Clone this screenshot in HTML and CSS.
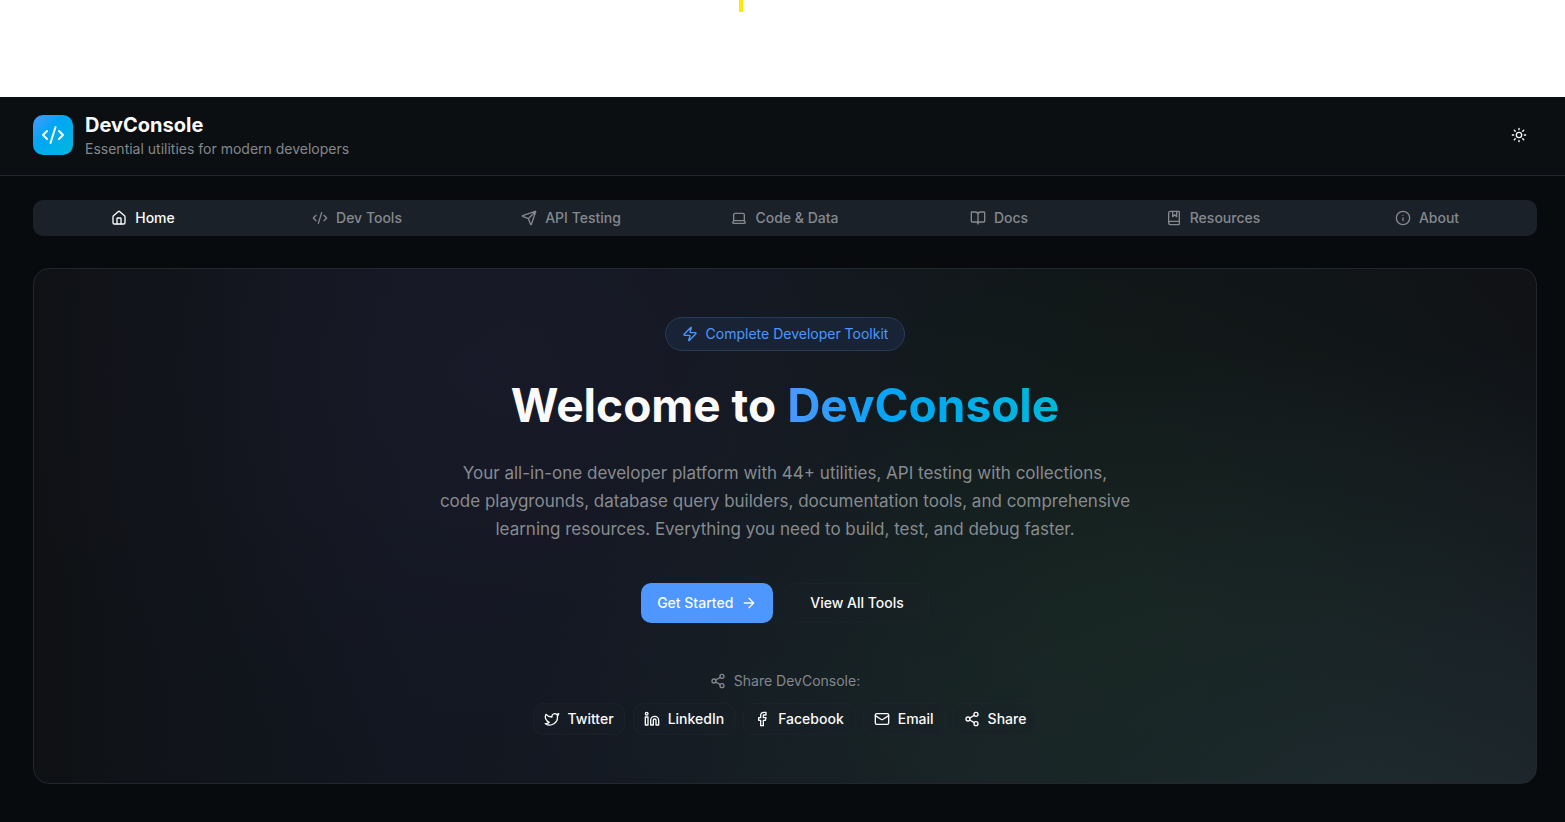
FILE: index.html
```html
<!DOCTYPE html>
<html lang="en">
<head>
<meta charset="utf-8">
<meta name="viewport" content="width=device-width, initial-scale=1">
<title>DevConsole</title>
<link rel="stylesheet" href="styles.css">
</head>
<body>
<svg class="sprite" aria-hidden="true">
  <symbol id="code" viewBox="0 0 24 24"><path d="m18 16 4-4-4-4M6 8l-4 4 4 4M14.5 4l-5 16"/></symbol>
  <symbol id="share" viewBox="0 0 24 24"><circle cx="18" cy="5" r="3"/><circle cx="6" cy="12" r="3"/><circle cx="18" cy="19" r="3"/><path d="m8.59 13.51 6.83 3.98M15.41 6.51l-6.82 3.98"/></symbol>
</svg>
<div class="top-strip"><span class="marker"></span></div>
<div class="app">
  <header class="header">
    <div class="brand">
      <div class="logo"><svg class="icon icon-lg"><use href="#code"/></svg></div>
      <div>
        <div class="brand-name">DevConsole</div>
        <div class="brand-tagline">Essential utilities for modern developers</div>
      </div>
    </div>
    <button class="theme-toggle" type="button" aria-label="Toggle theme">
      <svg class="icon" viewBox="0 0 24 24"><circle cx="12" cy="12" r="4"/><path d="M12 2v2M12 20v2M4.93 4.93l1.41 1.41M17.66 17.66l1.41 1.41M2 12h2M20 12h2M6.34 17.66l-1.41 1.41M19.07 4.93l-1.41 1.41"/></svg>
    </button>
  </header>
  <main class="main">
    <nav class="tabs" aria-label="Main">
      <a class="tab tab-active" href="#home"><svg class="icon" viewBox="0 0 24 24"><path d="M15 21v-8a1 1 0 0 0-1-1h-4a1 1 0 0 0-1 1v8"/><path d="M3 10a2 2 0 0 1 .71-1.53l7-6a2 2 0 0 1 2.58 0l7 6A2 2 0 0 1 21 10v9a2 2 0 0 1-2 2H5a2 2 0 0 1-2-2z"/></svg>Home</a>
      <a class="tab" href="#tools"><svg class="icon"><use href="#code"/></svg>Dev Tools</a>
      <a class="tab" href="#api"><svg class="icon" viewBox="0 0 24 24"><path d="M14.54 21.69a.5.5 0 0 0 .93-.03l6.5-19a.5.5 0 0 0-.63-.63l-19 6.5a.5.5 0 0 0-.03.93l7.93 3.18a2 2 0 0 1 1.11 1.11zM21.85 2.15l-10.94 10.94"/></svg>API Testing</a>
      <a class="tab" href="#data"><svg class="icon" viewBox="0 0 24 24"><path d="M18 5a2 2 0 0 1 2 2v8.53a2 2 0 0 0 .21.89l1.07 2.13a1 1 0 0 1-.9 1.45H3.62a1 1 0 0 1-.9-1.45l1.07-2.13a2 2 0 0 0 .21-.89V7a2 2 0 0 1 2-2zM20.05 15.99H3.95"/></svg>Code &amp; Data</a>
      <a class="tab" href="#docs"><svg class="icon" viewBox="0 0 24 24"><path d="M12 7v14M3 18a1 1 0 0 1-1-1V4a1 1 0 0 1 1-1h5a4 4 0 0 1 4 4 4 4 0 0 1 4-4h5a1 1 0 0 1 1 1v13a1 1 0 0 1-1 1h-6a3 3 0 0 0-3 3 3 3 0 0 0-3-3z"/></svg>Docs</a>
      <a class="tab" href="#resources"><svg class="icon" viewBox="0 0 24 24"><path d="M10 2v8l3-3 3 3V2"/><path d="M4 19.5v-15A2.5 2.5 0 0 1 6.5 2H19a1 1 0 0 1 1 1v18a1 1 0 0 1-1 1H6.5a1 1 0 0 1 0-5H20"/></svg>Resources</a>
      <a class="tab" href="#about"><svg class="icon" viewBox="0 0 24 24"><circle cx="12" cy="12" r="10"/><path d="M12 16v-4M12 8h.01"/></svg>About</a>
    </nav>
    <section class="hero">
      <div class="badge"><svg class="icon" viewBox="0 0 24 24"><path d="M4 14a1 1 0 0 1-.78-1.63l9.9-10.2a.5.5 0 0 1 .86.46l-1.92 6.02A1 1 0 0 0 13 10h7a1 1 0 0 1 .78 1.63l-9.9 10.2a.5.5 0 0 1-.86-.46l1.92-6.02A1 1 0 0 0 11 14z"/></svg>Complete Developer Toolkit</div>
      <h1 class="title">Welcome to <span class="title-accent">DevConsole</span></h1>
      <p class="lead">Your all-in-one developer platform with 44+ utilities, API testing with collections,<br>code playgrounds, database query builders, documentation tools, and comprehensive<br>learning resources. Everything you need to build, test, and debug faster.</p>
      <div class="actions">
        <button class="button button-primary" type="button">Get Started<svg class="icon" viewBox="0 0 24 24"><path d="M5 12h14M12 5l7 7-7 7"/></svg></button>
        <button class="button button-outline" type="button">View All Tools</button>
      </div>
      <div class="share-label"><svg class="icon"><use href="#share"/></svg>Share DevConsole:</div>
      <div class="share-row">
        <button class="share-button" type="button"><svg class="icon" viewBox="0 0 24 24"><path d="M22 4s-.7 2.1-2 3.4c1.6 10-9.4 17.3-18 11.6 2.2.1 4.4-.6 6-2C3 15.5.5 9.6 3 5c2.2 2.6 5.6 4.1 9 4-.9-4.2 4-6.6 7-3.8 1.1 0 3-1.2 3-1.2z"/></svg>Twitter</button>
        <button class="share-button" type="button"><svg class="icon" viewBox="0 0 24 24"><path d="M16 8a6 6 0 0 1 6 6v7h-4v-7a2 2 0 0 0-4 0v7h-4v-7a6 6 0 0 1 6-6z"/><rect x="2" y="9" width="4" height="12"/><circle cx="4" cy="4" r="2"/></svg>LinkedIn</button>
        <button class="share-button" type="button"><svg class="icon" viewBox="0 0 24 24"><path d="M18 2h-3a5 5 0 0 0-5 5v3H7v4h3v8h4v-8h3l1-4h-4V7a1 1 0 0 1 1-1h3z"/></svg>Facebook</button>
        <button class="share-button" type="button"><svg class="icon" viewBox="0 0 24 24"><rect x="2" y="4" width="20" height="16" rx="2"/><path d="m22 7-8.97 5.7a1.94 1.94 0 0 1-2.06 0L2 7"/></svg>Email</button>
        <button class="share-button" type="button"><svg class="icon"><use href="#share"/></svg>Share</button>
      </div>
    </section>
  </main>
</div>
</body>
</html>
```

FILE: styles.css
```css
* { box-sizing: border-box; }

body {
  margin: 0;
  min-height: 100vh;
  display: flex;
  flex-direction: column;
  background: #fff;
  color: #fafafa;
  font-family: Inter, "Liberation Sans", sans-serif;
  font-size: 14px;
  line-height: 20px;
}

button { font: inherit; color: inherit; }
.sprite { display: none; }

.icon {
  width: 16px;
  height: 16px;
  flex: none;
  fill: none;
  stroke: currentColor;
  stroke-width: 2;
  stroke-linecap: round;
  stroke-linejoin: round;
}
.icon-lg { width: 24px; height: 24px; }

.top-strip {
  height: 97px;
  display: flex;
  justify-content: center;
  padding-right: 84px;
}
.marker { width: 4px; height: 12px; background: #fbe60d; }

.app { flex: 1; background: #070b0e; }

.header {
  display: flex;
  align-items: center;
  justify-content: space-between;
  padding: 14px 28px 16px 33px;
  background: #0b0f12;
  border-bottom: 1px solid #23272d;
}
.brand { display: flex; align-items: center; gap: 12px; }
.logo {
  width: 40px;
  height: 40px;
  display: flex;
  align-items: center;
  justify-content: center;
  border-radius: 10px;
  background: linear-gradient(135deg, #4d97ff, #00a6f4 40%, #00b8db);
}
.brand-name { font-size: 20px; line-height: 28px; font-weight: 700; }
.brand-tagline { color: #84878b; }
.theme-toggle {
  display: flex;
  padding: 10px;
  border: 0;
  background: none;
}

.main { padding: 24px 28px 38px 33px; }

.tabs {
  display: grid;
  grid-template-columns: repeat(7, 1fr);
  padding: 3px;
  border-radius: 10px;
  background: #1a2129;
}
.tab {
  display: flex;
  align-items: center;
  justify-content: center;
  gap: 8px;
  padding: 5px 0;
  font-weight: 500;
  color: #84898f;
  text-decoration: none;
}
.tab-active { color: #fafafa; }

.hero {
  display: flex;
  flex-direction: column;
  align-items: center;
  margin-top: 32px;
  padding: 48px 32px;
  border: 1px solid #22272e;
  border-radius: 16px;
  background:
    radial-gradient(ellipse 32% 80% at 30% 20%, rgba(34, 28, 50, 0.4), transparent),
    radial-gradient(ellipse 36% 90% at 72% 70%, rgba(24, 48, 34, 0.42), transparent),
    radial-gradient(ellipse 60% 90% at 90% 105%, #1f2931, transparent),
    linear-gradient(90deg, #0f1114, #121721 25%, #121820 48%, #101517 70%, #101216);
  text-align: center;
}
.badge {
  display: flex;
  align-items: center;
  gap: 8px;
  padding: 6px 16px;
  border: 1px solid #263b5a;
  border-radius: 17px;
  background: #182436;
  color: #4d97ff;
}
.title {
  margin: 24px 0;
  font-size: 46px;
  line-height: 60px;
  font-weight: 700;
}
.title-accent {
  background: linear-gradient(90deg, #4d97ff, #00a6f4 40%, #00b8db);
  background-clip: text;
  color: transparent;
}
.lead {
  margin: 0 0 40px;
  font-size: 17px;
  line-height: 28px;
  color: #878b8f;
}
.actions { display: flex; gap: 12px; }
.button {
  display: flex;
  align-items: center;
  gap: 8px;
  padding: 9px 15px;
  border: 1px solid transparent;
  border-radius: 10px;
  font-weight: 500;
}
.button-primary { background: #4d97ff; }
.button-outline {
  padding: 9px 24px;
  background: rgba(26, 33, 41, 0.3);
  border-color: rgba(40, 48, 56, 0.2);
}
.share-label {
  display: flex;
  align-items: center;
  gap: 8px;
  margin: 48px 0 12px;
  color: #84878b;
}
.share-row { display: flex; flex-wrap: wrap; justify-content: center; gap: 8px; }
.share-button {
  display: flex;
  align-items: center;
  gap: 8px;
  padding: 5px 10px;
  border: 1px solid rgba(40, 48, 56, 0.25);
  border-radius: 10px;
  background: rgba(26, 33, 41, 0.3);
  font-weight: 500;
}
```
